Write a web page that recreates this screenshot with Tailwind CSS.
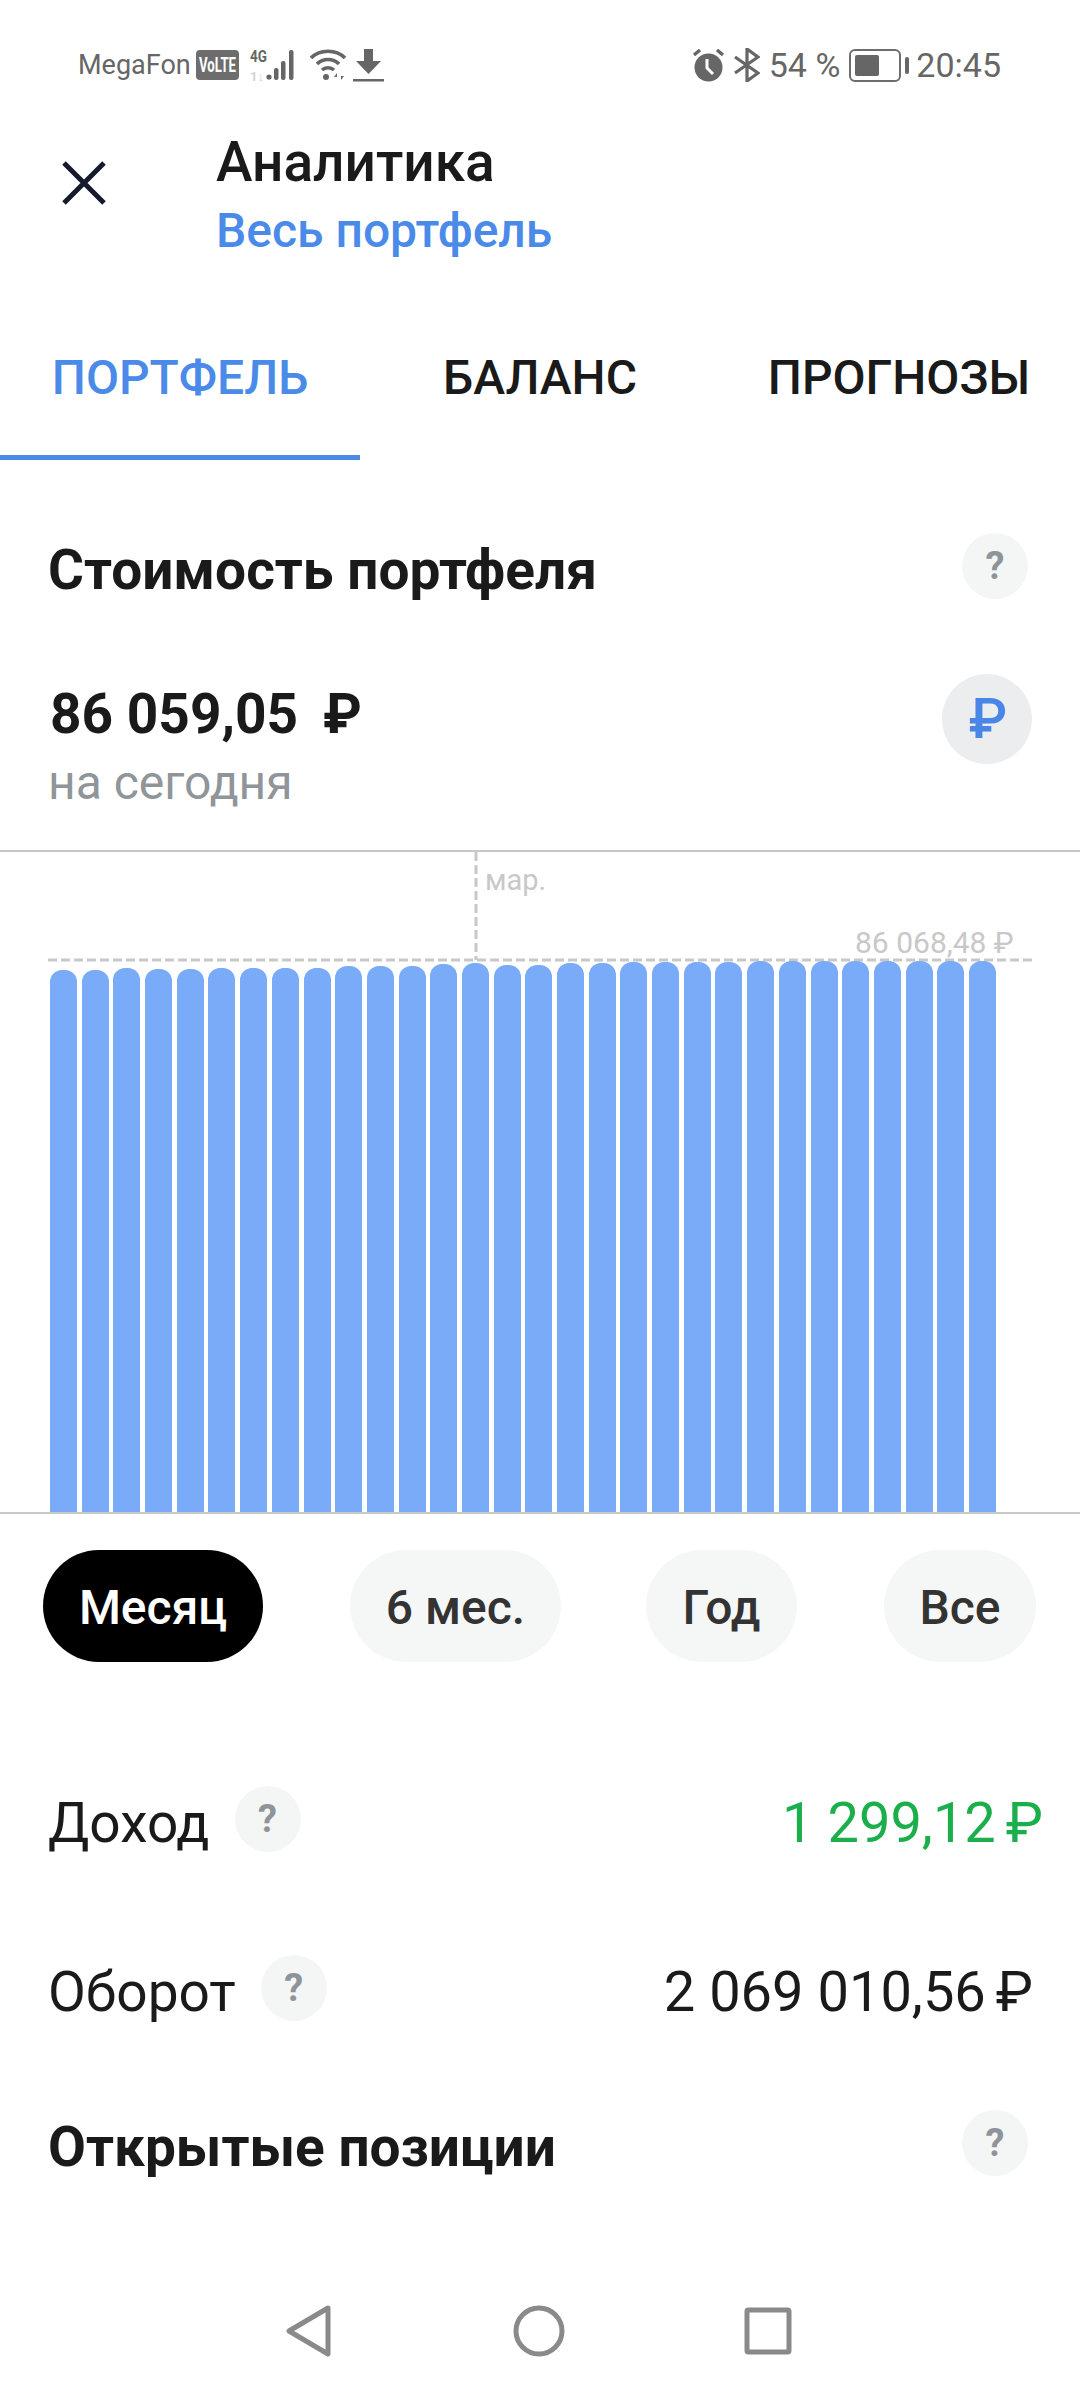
<!doctype html>
<html lang="ru">
  <head>
    <meta charset="utf-8" />
    <meta name="viewport" content="width=device-width, initial-scale=1" />
    <script src="https://cdn.jsdelivr.net/npm/@tailwindcss/browser@4"></script>
    <title>Аналитика</title>
  </head>
  <body class="bg-white">
    <div class="w-[1080px] h-[2388px] overflow-hidden flex flex-col font-[Roboto,sans-serif] text-[#1a1a1a]">
      <!-- status bar -->
      <div class="h-[130px] shrink-0 flex items-center justify-between pl-[78px] pr-[79px] text-[#666666]">
        <div class="flex items-center">
          <span class="text-[27px] leading-none">MegaFon</span>
          <svg class="ml-[5px] overflow-visible" width="43" height="30" viewBox="0 0 43 30">
            <rect width="43" height="30" rx="4" fill="#6d6d6d" />
            <text x="3" y="22" font-size="20" font-weight="700" font-family="Roboto" fill="#ffffff" textLength="37" lengthAdjust="spacingAndGlyphs">VoLTE</text>
          </svg>
          <svg class="ml-[11px] overflow-visible" width="50" height="34" viewBox="0 0 50 34" fill="#666666">
            <text x="0" y="14" font-size="16" font-weight="700" font-family="Roboto" textLength="17" lengthAdjust="spacingAndGlyphs">4G</text>
            <text x="0" y="33" font-size="13" font-weight="700" font-family="Roboto" fill="#d2d2d2">1↓</text>
            <circle cx="19" cy="29" r="2.600" />
            <rect x="24" y="20" width="4.500" height="12" rx="2" />
            <rect x="31" y="13" width="4.500" height="19" rx="2" />
            <rect x="39" y="2" width="4.500" height="30" rx="2" />
          </svg>
          <svg class="ml-[9px]" width="38" height="34" viewBox="0 0 38 34" fill="none" stroke="#666666" stroke-width="3.600">
            <path d="M2 10C11 1 27 1 36 10" />
            <path d="M8 16C14 10 24 10 30 16" />
            <path d="M13 22C16 19 22 19 25 22" />
            <circle cx="17" cy="29" r="3" fill="#666666" stroke="none" />
            <path d="M28 32v-7l-3 4h3M32 25v7l3-4h-3" fill="#666666" stroke="none" />
          </svg>
          <svg class="ml-[6px]" width="31" height="33" viewBox="0 0 31 33" fill="#666666">
            <path d="M11 0h9v12h8L15.500 25 3 12h8z" />
            <rect x="0" y="30" width="31" height="2.500" />
          </svg>
        </div>
        <div class="flex items-center">
          <svg width="33" height="33" viewBox="0 0 33 33" fill="#666666">
            <circle cx="16.500" cy="18.500" r="14" />
            <path d="M2 6l6-5M31 6l-6-5" stroke="#666666" stroke-width="3.400" />
            <path d="M15 10v9l6 6" stroke="#ffffff" stroke-width="3" fill="none" />
          </svg>
          <svg class="ml-[9px]" width="26" height="34" viewBox="0 0 26 34" fill="none" stroke="#666666" stroke-width="3.200">
            <path d="M1 9l23 16-11 8V1l11 8L1 25" />
          </svg>
          <span class="ml-[9px] text-[34px] leading-none">54 %</span>
          <div class="ml-[9px] w-[52px] h-[33px] rounded-[6px] border-[2.500px] border-[#6d6d6d] p-[4px] flex">
            <div class="w-[24px] rounded-[2px] bg-[#666666]"></div>
          </div>
          <div class="ml-[4px] w-[4px] h-[17px] rounded-[2px] bg-[#666666]"></div>
          <span class="ml-[7px] text-[34px] leading-none">20:45</span>
        </div>
      </div>

      <!-- header -->
      <div class="h-[132px] shrink-0 flex">
        <div class="w-[216px] shrink-0 pl-[60px] pt-[29px]">
          <svg width="48" height="48" viewBox="0 0 48 48" fill="none" stroke="#151b2b" stroke-width="5">
            <path d="M4 4l40 40M44 4L4 44" />
          </svg>
        </div>
        <div class="flex flex-col">
          <span class="text-[55px] leading-[64px] font-medium">Аналитика</span>
          <span class="text-[48px] leading-[60px] font-medium text-[#4a8ae8] mt-[7px]">Весь портфель</span>
        </div>
      </div>

      <!-- tabs -->
      <div class="h-[198px] shrink-0 grid grid-cols-3 items-end text-[48px] font-medium">
        <div class="h-[120px] flex items-center justify-center border-b-[5px] border-[#4a8ae8] text-[#4a8ae8] pb-[40px]">ПОРТФЕЛЬ</div>
        <div class="h-[120px] flex items-center justify-center pb-[45px]">БАЛАНС</div>
        <div class="h-[120px] flex items-center justify-center pb-[45px] pr-[2px]">ПРОГНОЗЫ</div>
      </div>

      <!-- portfolio value -->
      <div class="h-[390px] shrink-0 flex flex-col px-[48px] pt-[73px]">
        <div class="flex items-start justify-between pr-[4px]">
          <span class="h-[66px] text-[55px] leading-[66px] font-bold pt-[4px]">Стоимость портфеля</span>
          <span class="w-[66px] h-[66px] rounded-full bg-[#f4f5f5] text-[#8e9499] text-[38px] font-bold flex items-center justify-center">?</span>
        </div>
        <div class="flex justify-between mt-[75px]">
          <div class="flex flex-col mt-[8px]">
            <span class="text-[55px] leading-[64px] font-bold pl-[2px]">86 059,05<span class="ml-[25px]">₽</span></span>
            <span class="text-[48px] leading-[56px] text-[#8f9599] mt-[9px]">на сегодня</span>
          </div>
          <span class="w-[90px] h-[90px] rounded-full bg-[#ebedee] text-[#4a86e8] text-[56px] font-medium flex items-center justify-center pl-[2px]">₽</span>
        </div>
      </div>

      <!-- chart -->
      <div class="relative h-[664px] shrink-0 border-y-2 border-[#c8c8c8]">
        <svg class="absolute left-0 top-0" width="1080" height="110" fill="none" stroke="#c8c8c8" stroke-width="3" stroke-dasharray="9 4">
          <path d="M476 0V108" />
          <path d="M48 108H1032" />
        </svg>
        <span class="absolute left-[485px] top-[11px] text-[29px] leading-[34px] text-[#c8c8c8]">мар.</span>
        <span class="absolute left-[855px] top-[73px] text-[30px] leading-[36px] text-[#c8c8c8]">86 068,48 ₽</span>
        <div id="bars" class="relative h-full pl-[50px] flex items-end gap-[4.700px]"></div>
      </div>

      <!-- periods -->
      <div class="h-[148px] shrink-0 pt-[36px] text-[48px] font-medium text-[#333333]">
        <div class="flex pl-[43px]">
          <span class="w-[220px] h-[112px] pt-[3px] rounded-full bg-black text-white flex items-center justify-center">Месяц</span>
          <span class="ml-[87px] w-[211px] h-[112px] pt-[3px] rounded-full bg-[#f5f7f6] flex items-center justify-center">6 мес.</span>
          <span class="ml-[85px] w-[151px] h-[112px] pt-[3px] rounded-full bg-[#f5f7f6] flex items-center justify-center">Год</span>
          <span class="ml-[87px] w-[152px] h-[112px] pt-[3px] rounded-full bg-[#f5f7f6] flex items-center justify-center">Все</span>
        </div>
      </div>

      <!-- stats -->
      <div class="flex flex-col pl-[48px] pt-[124px]">
        <div class="h-[66px] flex items-center text-[55px]">
          <span class="pt-[8px]">Доход</span>
          <span class="ml-[25px] w-[66px] h-[66px] rounded-full bg-[#f4f5f5] text-[#8e9499] text-[38px] font-bold flex items-center justify-center">?</span>
          <span class="ml-auto mr-[37px] text-[56px] text-[#1aaf4b] pt-[8px]">1 299,12<span class="ml-[10px]">₽</span></span>
        </div>
        <div class="h-[66px] mt-[103px] flex items-center text-[55px]">
          <span class="pt-[8px]">Оборот</span>
          <span class="ml-[25px] w-[66px] h-[66px] rounded-full bg-[#f4f5f5] text-[#8e9499] text-[38px] font-bold flex items-center justify-center">?</span>
          <span class="ml-auto mr-[47px] text-[56px] pt-[8px]">2 069 010,56<span class="ml-[10px]">₽</span></span>
        </div>
        <div class="h-[66px] mt-[89px] flex items-center pr-[52px] justify-between">
          <span class="text-[55px] font-bold pt-[8px]">Открытые позиции</span>
          <span class="w-[66px] h-[66px] rounded-full bg-[#f4f5f5] text-[#8e9499] text-[38px] font-bold flex items-center justify-center">?</span>
        </div>
      </div>

      <!-- nav bar -->
      <div class="mt-auto h-[83px] shrink-0 flex items-start pl-[286px]">
        <svg width="46" height="52" viewBox="0 0 46 52" fill="none" stroke="#8a8a8a" stroke-width="5" stroke-linejoin="round">
          <path d="M42 3L3 26l39 23z" />
        </svg>
        <svg class="ml-[181px]" width="52" height="52" viewBox="0 0 52 52" fill="none" stroke="#8a8a8a" stroke-width="5">
          <circle cx="26" cy="26" r="23" />
        </svg>
        <svg class="ml-[179px] mt-[2px]" width="48" height="48" viewBox="0 0 48 48" fill="none" stroke="#8a8a8a" stroke-width="5" stroke-linejoin="round">
          <rect x="3" y="3" width="42" height="42" rx="1.500" />
        </svg>
      </div>
    </div>
    <script>
      const tops = [970, 970, 968, 968.5, 969, 968, 968, 968, 968, 965.5, 965.5, 966, 964, 963, 965, 965, 963, 963, 962, 962, 962, 962, 961, 961, 961, 961, 961, 961, 961, 961];
      const bars = document.getElementById("bars");
      tops.forEach((top) => {
        const bar = document.createElement("div");
        bar.className = "w-[27px] shrink-0 rounded-t-[12px] bg-[#7aabf8]";
        bar.style.height = 1512 - top + "px";
        bars.appendChild(bar);
      });
    </script>
  </body>
</html>
